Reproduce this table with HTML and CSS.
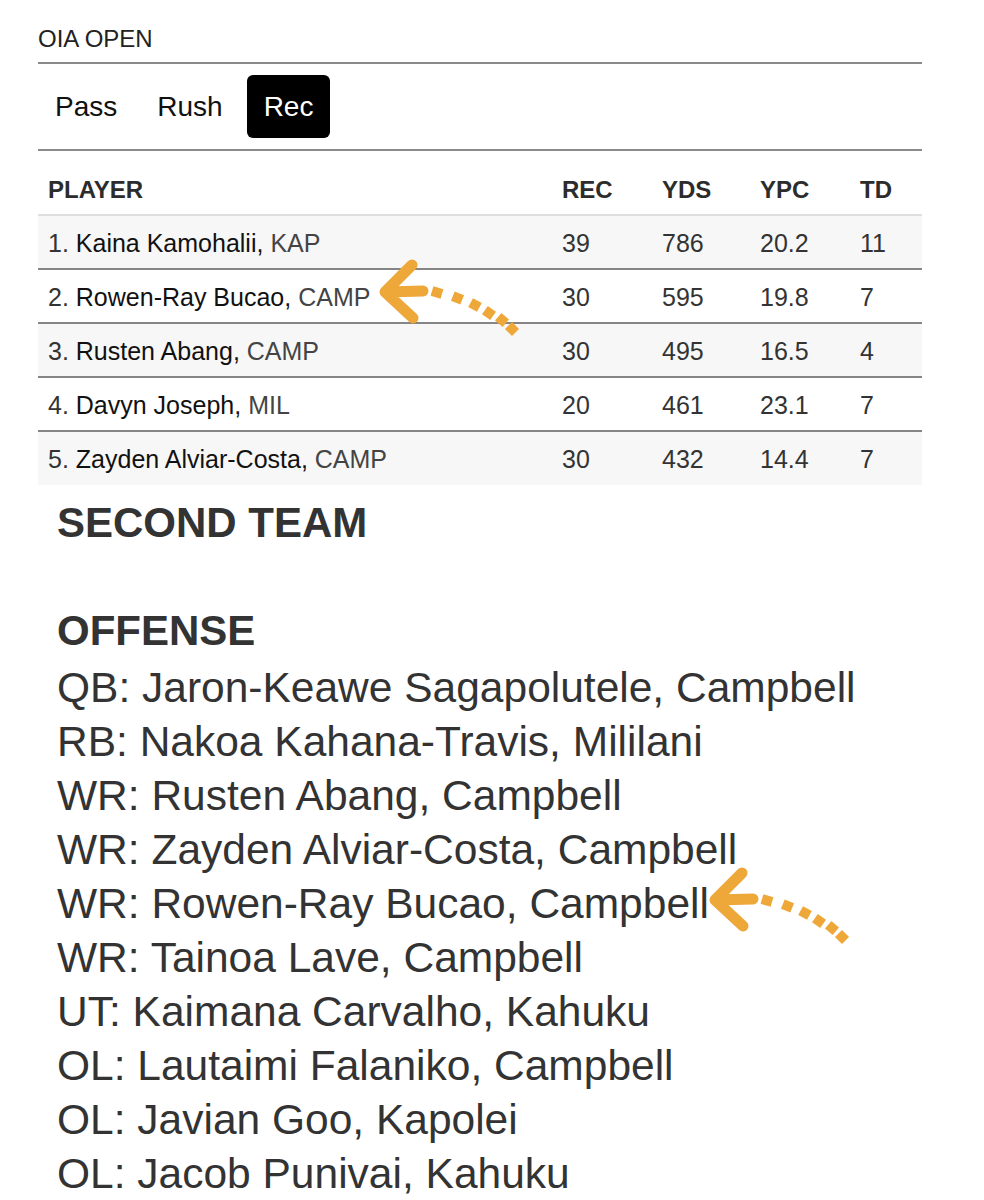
FILE: index.html
```html
<!DOCTYPE html>
<html>
<head>
<meta charset="utf-8">
<link rel="stylesheet" href="styles.css">
</head>
<body>
<div class="page">
  <div class="stats">
    <div class="stats-title">OIA OPEN</div>
    <div class="tabs">
      <span class="tab">Pass</span>
      <span class="tab">Rush</span>
      <span class="tab active">Rec</span>
    </div>
    <div class="table">
      <div class="row head">
        <div class="cell">PLAYER</div>
        <div class="cell">REC</div>
        <div class="cell">YDS</div>
        <div class="cell">YPC</div>
        <div class="cell">TD</div>
      </div>
      <div class="row odd">
        <div class="cell"><span class="rank">1.</span> <span class="name">Kaina Kamohalii,</span> <span class="team">KAP</span></div>
        <div class="cell">39</div><div class="cell">786</div><div class="cell">20.2</div><div class="cell">11</div>
      </div>
      <div class="row">
        <div class="cell"><span class="rank">2.</span> <span class="name">Rowen-Ray Bucao,</span> <span class="team">CAMP</span></div>
        <div class="cell">30</div><div class="cell">595</div><div class="cell">19.8</div><div class="cell">7</div>
      </div>
      <div class="row odd">
        <div class="cell"><span class="rank">3.</span> <span class="name">Rusten Abang,</span> <span class="team">CAMP</span></div>
        <div class="cell">30</div><div class="cell">495</div><div class="cell">16.5</div><div class="cell">4</div>
      </div>
      <div class="row">
        <div class="cell"><span class="rank">4.</span> <span class="name">Davyn Joseph,</span> <span class="team">MIL</span></div>
        <div class="cell">20</div><div class="cell">461</div><div class="cell">23.1</div><div class="cell">7</div>
      </div>
      <div class="row odd last">
        <div class="cell"><span class="rank">5.</span> <span class="name">Zayden Alviar-Costa,</span> <span class="team">CAMP</span></div>
        <div class="cell">30</div><div class="cell">432</div><div class="cell">14.4</div><div class="cell">7</div>
      </div>
    </div>
  </div>

  <div class="team-list">
    <h2 class="heading second">SECOND TEAM</h2>
    <h3 class="heading offense">OFFENSE</h3>
    <ul class="entries">
      <li>QB: Jaron-Keawe Sagapolutele, Campbell</li>
      <li>RB: Nakoa Kahana-Travis, Mililani</li>
      <li>WR: Rusten Abang, Campbell</li>
      <li>WR: Zayden Alviar-Costa, Campbell</li>
      <li>WR: Rowen-Ray Bucao, Campbell</li>
      <li>WR: Tainoa Lave, Campbell</li>
      <li>UT: Kaimana Carvalho, Kahuku</li>
      <li>OL: Lautaimi Falaniko, Campbell</li>
      <li>OL: Javian Goo, Kapolei</li>
      <li>OL: Jacob Punivai, Kahuku</li>
    </ul>
  </div>

  <svg class="arrow arrow-one" width="160" height="100" viewBox="0 0 160 100">
    <g fill="none" stroke="#EEA83A" stroke-linecap="round" stroke-linejoin="round" stroke-width="11">
      <path d="M37 10 L10 37 L38 63 M10 37 L48 36"/>
    </g>
    <g stroke="#EEA83A" stroke-width="10" stroke-linecap="butt">
      <line x1="57" y1="36" x2="67" y2="39"/>
      <line x1="77.8" y1="41.1" x2="87.2" y2="44.9"/>
      <line x1="95.6" y1="47.6" x2="104.4" y2="52.4"/>
      <line x1="109.9" y1="55.1" x2="118.1" y2="60.9"/>
      <line x1="123.2" y1="61.8" x2="130.8" y2="68.2"/>
      <line x1="133.5" y1="70.5" x2="140.5" y2="77.5"/>
    </g>
  </svg>
  <svg class="arrow arrow-two" width="160" height="100" viewBox="0 0 160 100">
    <g fill="none" stroke="#EEA83A" stroke-linecap="round" stroke-linejoin="round" stroke-width="11">
      <path d="M37 10 L10 37 L38 63 M10 37 L48 36"/>
    </g>
    <g stroke="#EEA83A" stroke-width="10" stroke-linecap="butt">
      <line x1="57" y1="36" x2="67" y2="39"/>
      <line x1="77.8" y1="41.1" x2="87.2" y2="44.9"/>
      <line x1="95.6" y1="47.6" x2="104.4" y2="52.4"/>
      <line x1="109.9" y1="55.1" x2="118.1" y2="60.9"/>
      <line x1="123.2" y1="61.8" x2="130.8" y2="68.2"/>
      <line x1="133.5" y1="70.5" x2="140.5" y2="77.5"/>
    </g>
  </svg>
</div>
</body>
</html>
```
FILE: styles.css
```css
html, body {
  margin: 0;
  padding: 0;
  background: #fff;
}

body {
  font-family: "Liberation Sans", Arial, Helvetica, sans-serif;
  color: #333;
}

.page {
  position: relative;
  width: 984px;
  min-height: 1200px;
  overflow: hidden;
}

.stats {
  margin-left: 38px;
  width: 884px;
}

.stats-title {
  font-size: 24px;
  line-height: 28px;
  color: #222;
  padding: 25px 0 9px;
  border-bottom: 2px solid #8a8a8a;
}

.tabs {
  display: flex;
  gap: 6px;
  padding: 11px 0;
  border-bottom: 2px solid #8a8a8a;
}

.tab {
  font-size: 28px;
  line-height: 63px;
  height: 63px;
  padding: 0 17px;
  color: #111;
  border-radius: 6px;
}

.tab.active {
  background: #000;
  color: #fff;
  margin-left: 1px;
}

.row {
  display: grid;
  grid-template-columns: 514px 100px 98px 100px 72px;
  height: 52px;
  align-items: center;
  font-size: 25px;
  color: #333;
  border-bottom: 2px solid #858585;
}

.row.head {
  height: auto;
  padding: 22px 0 9px;
  line-height: 30px;
  font-size: 24px;
  font-weight: bold;
  color: #2c2c2c;
  border-bottom: 2px solid #dedede;
}

.row.odd {
  background: #f7f7f7;
}

.row.last {
  border-bottom: none;
  height: 53px;
}

.cell {
  padding-left: 10px;
  padding-top: 2px;
  white-space: nowrap;
}

.rank {
  color: #333;
}

.name {
  color: #111;
}

.team {
  color: #444;
}

.team-list {
  margin: 11px 0 0 57px;
  color: #333;
}

.heading {
  margin: 0;
  font-size: 42px;
  line-height: 54px;
  font-weight: bold;
  color: #333;
}

.heading.second {
  margin-bottom: 54px;
}

.heading.offense {
  margin-bottom: 3px;
}

.entries {
  list-style: none;
  margin: 0;
  padding: 0;
}

.entries li {
  font-size: 42.5px;
  line-height: 54px;
  white-space: nowrap;
}

.arrow {
  position: absolute;
}

.arrow-one {
  left: 375px;
  top: 255px;
}

.arrow-two {
  left: 705px;
  top: 863px;
}
```
